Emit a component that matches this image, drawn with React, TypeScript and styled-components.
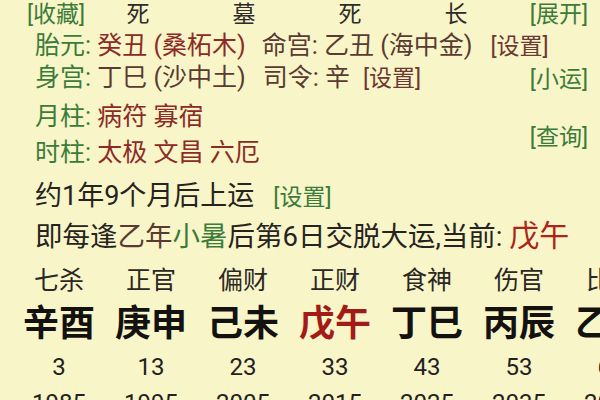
import styled, { createGlobalStyle } from 'styled-components'

const GREEN = '#3b7c3a'
const RED = '#8c2a26'
const BROWN = '#5a3a31'
const INK = '#262320'

const Global = createGlobalStyle`
  html, body {
    margin: 0;
    padding: 0;
    background: #f8f5c9;
  }
  body {
    font-family: Roboto, "Noto Sans CJK SC", sans-serif;
  }
`

const Page = styled.div`
  width: 600px;
  height: 400px;
  overflow: hidden;
  background: #f8f5c9;
  color: ${INK};
`

const TopRow = styled.div`
  display: grid;
  grid-template-columns: 58px repeat(4, 106px) 1fr;
  align-items: center;
  height: 27px;
  padding: 1px 12px 0 27px;
  font-size: 23px;
  line-height: 26px;
`

const Marker = styled.span`
  text-align: center;
  color: #2e2b28;
`

const Link = styled.span<{ $tone?: 'green' | 'brown'; $ml?: number }>`
  color: ${(p) => (p.$tone === 'brown' ? '#6e3833' : GREEN)};
  margin-left: ${(p) => p.$ml ?? 0}px;
  font-size: 23px;
  white-space: nowrap;
`

const RightLink = styled(Link)`
  justify-self: end;
`

const Info = styled.div`
  display: flex;
  margin-top: 2px;
`

const InfoMain = styled.div`
  flex: 1;
  min-width: 0;
  padding-left: 35px;
  display: flex;
  flex-direction: column;
`

const InfoSide = styled.div`
  flex-shrink: 0;
  width: 60px;
  padding-right: 12px;
  display: flex;
  flex-direction: column;
  align-items: flex-end;
  line-height: 26px;
`

const SideLink = styled(Link)<{ $mt: number }>`
  margin-top: ${(p) => p.$mt}px;
`

const Line = styled.div<{ $mt?: number; $size?: number; $h?: number }>`
  margin-top: ${(p) => p.$mt ?? 0}px;
  font-size: ${(p) => p.$size ?? 25}px;
  line-height: ${(p) => p.$h ?? 32}px;
  height: ${(p) => p.$h ?? 32}px;
  white-space: nowrap;
`

const Key = styled.span`
  color: ${GREEN};
`

const Val = styled.span<{ $tone?: 'red' | 'brown' | 'green' | 'ink'; $ml?: number }>`
  color: ${(p) =>
    p.$tone === 'brown' ? BROWN : p.$tone === 'green' ? GREEN : p.$tone === 'ink' ? INK : RED};
  margin-left: ${(p) => p.$ml ?? 0}px;
`

const Current = styled.span`
  color: #ad2219;
  font-size: 30px;
`

const Block = styled.div`
  padding-left: 35px;
`

const Steps = styled.div`
  display: grid;
  grid-template-columns: repeat(7, 92px);
  padding-left: 13px;
  margin-top: 6px;
`

const Step = styled.div`
  display: flex;
  flex-direction: column;
  align-items: center;
  white-space: nowrap;
`

const God = styled.div`
  font-size: 25px;
  line-height: 42px;
  height: 42px;
  color: #2a2724;
`

const Pillar = styled.div<{ $current?: boolean }>`
  font-size: 36px;
  font-weight: 700;
  line-height: 44px;
  height: 44px;
  color: ${(p) => (p.$current ? '#a31b17' : '#141210')};
`

const Age = styled.div`
  font-size: 24px;
  line-height: 42px;
  height: 42px;
  color: #24211f;
`

const Year = styled.div`
  font-size: 24px;
  line-height: 30px;
  height: 30px;
  color: #24211f;
`

const markers = ['死', '墓', '死', '长']

const steps = [
  { god: '七杀', pillar: '辛酉', age: 3, year: 1985 },
  { god: '正官', pillar: '庚申', age: 13, year: 1995 },
  { god: '偏财', pillar: '己未', age: 23, year: 2005 },
  { god: '正财', pillar: '戊午', age: 33, year: 2015, current: true },
  { god: '食神', pillar: '丁巳', age: 43, year: 2025 },
  { god: '伤官', pillar: '丙辰', age: 53, year: 2035 },
  { god: '比肩', pillar: '乙卯', age: 63, year: 2045 },
]

export default function App() {
  return (
    <Page>
      <Global />
      <TopRow>
        <Link>[收藏]</Link>
        {markers.map((m, i) => (
          <Marker key={i}>{m}</Marker>
        ))}
        <RightLink>[展开]</RightLink>
      </TopRow>

      <Info>
        <InfoMain>
          <Line>
            <Key>胎元: </Key>
            <Val>癸丑 (桑柘木)</Val>
            <Val $tone="brown" $ml={16}>命宫: 乙丑 (海中金)</Val>
            <Link $tone="brown" $ml={18}>[设置]</Link>
          </Line>
          <Line>
            <Key>身宫: </Key>
            <Val $tone="brown">丁巳 (沙中土)</Val>
            <Val $tone="brown" $ml={17}>司令: 辛</Val>
            <Link $tone="brown" $ml={13}>[设置]</Link>
          </Line>
          <Line $mt={7}>
            <Key>月柱: </Key>
            <Val>病符 寡宿</Val>
          </Line>
          <Line $mt={4}>
            <Key>时柱: </Key>
            <Val>太极 文昌 六厄</Val>
          </Line>
        </InfoMain>
        <InfoSide>
          <SideLink $mt={37}>[小运]</SideLink>
          <SideLink $mt={32}>[查询]</SideLink>
        </InfoSide>
      </Info>

      <Block>
        <Line $mt={9} $size={27} $h={36}>
          <Val $tone="ink">约1年9个月后上运</Val>
          <Link $ml={19}>[设置]</Link>
        </Line>
        <Line $mt={4} $size={27.5} $h={36}>
          <Val $tone="ink">即每逢</Val>
          <Val $tone="brown">乙年</Val>
          <Val $tone="green">小暑</Val>
          <Val $tone="ink">后第6日交脱大运,当前: </Val>
          <Current>戊午</Current>
        </Line>
      </Block>

      <Steps>
        {steps.map((s) => (
          <Step key={s.year}>
            <God>{s.god}</God>
            <Pillar $current={s.current}>{s.pillar}</Pillar>
            <Age>{s.age}</Age>
            <Year>{s.year}</Year>
          </Step>
        ))}
      </Steps>
    </Page>
  )
}
